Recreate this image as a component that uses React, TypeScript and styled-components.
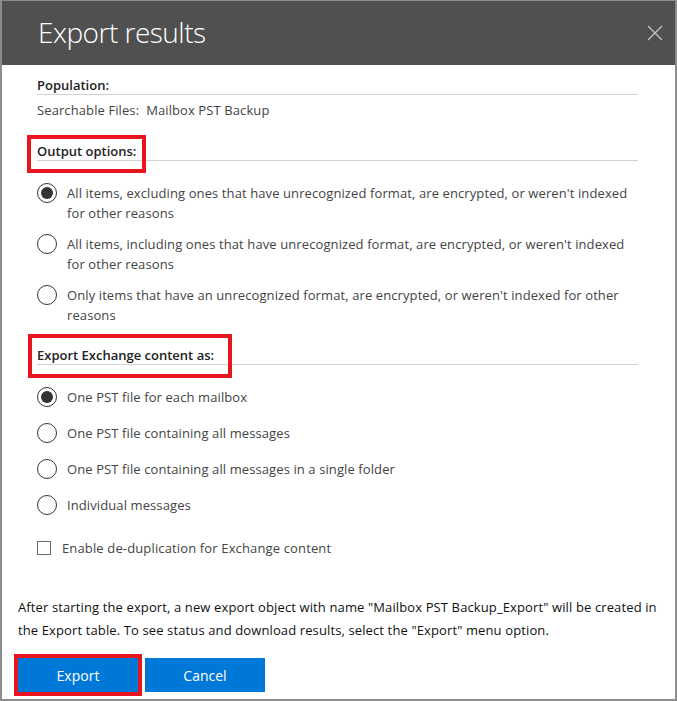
import React from "react";
import styled, { createGlobalStyle } from "styled-components";

const Global = createGlobalStyle`
  html, body { margin: 0; padding: 0; background: #ffffff; }
  * { box-sizing: border-box; }
`;

const Frame = styled.div`
  width: 677px;
  height: 701px;
  border-style: solid;
  border-color: #8c8c8c;
  border-width: 1px 2px 2px 2px;
  background: #ffffff;
  display: flex;
  flex-direction: column;
  font-family: "Open Sans", "Noto Sans", sans-serif;
  color: #444444;
`;

const Header = styled.header`
  height: 64px;
  flex: none;
  background: #505050;
  display: flex;
  align-items: center;
  justify-content: space-between;
  padding: 0 12px 2px 36px;
`;

const Title = styled.h1`
  margin: 0;
  font-size: 28px;
  font-weight: 300;
  line-height: 34px;
  letter-spacing: -0.5px;
  color: #ffffff;
`;

const CloseButton = styled.button`
  width: 16px;
  height: 16px;
  padding: 0;
  border: none;
  background: transparent;
  display: flex;
  margin-top: 1px;
`;

const Body = styled.div`
  padding: 11px 37px 0 35px;
  display: flex;
  flex-direction: column;
`;

const SectionHeading = styled.div<{ $gap: number }>`
  position: relative;
  margin-top: ${(p) => p.$gap}px;
  font-size: 13px;
  font-weight: 600;
  line-height: 18px;
  color: #222222;
  border-bottom: 1px solid #d2d2d2;
`;

const Annotation = styled.span<{ $l: number; $t: number; $w: number; $h: number }>`
  position: absolute;
  left: ${(p) => p.$l}px;
  top: ${(p) => p.$t}px;
  width: ${(p) => p.$w}px;
  height: ${(p) => p.$h}px;
  border: 4px solid #e8141e;
  pointer-events: none;
`;

const Value = styled.div`
  margin-top: 5px;
  font-size: 13px;
  line-height: 20px;
  letter-spacing: 0.1px;
  color: #444444;
`;

const RadioGroup = styled.div<{ $gap: number }>`
  margin-top: 22px;
  display: flex;
  flex-direction: column;
  gap: ${(p) => p.$gap}px;
`;

const Option = styled.label`
  display: flex;
  align-items: flex-start;
  gap: 10px;
  font-size: 13px;
  line-height: 20px;
  letter-spacing: 0.1px;
  color: #444444;
  white-space: pre-line;
`;

const RadioDot = styled.span<{ $checked: boolean }>`
  flex: none;
  width: 20px;
  height: 20px;
  border-radius: 50%;
  border: 1.5px solid #333333;
  display: flex;
  align-items: center;
  justify-content: center;
  &::after {
    content: "";
    width: 12px;
    height: 12px;
    border-radius: 50%;
    background: ${(p) => (p.$checked ? "#333333" : "transparent")};
  }
`;

const CheckRow = styled.label`
  margin-top: 23px;
  display: flex;
  align-items: center;
  gap: 11px;
  font-size: 13px;
  line-height: 20px;
  letter-spacing: 0.14px;
  color: #444444;
`;

const CheckBox = styled.span`
  flex: none;
  width: 14px;
  height: 14px;
  border: 1px solid #6a6a6a;
  background: #ffffff;
`;

const Footer = styled.div`
  margin-top: auto;
  padding: 0 8px 7px 16px;
`;

const Note = styled.p`
  margin: 0;
  font-size: 13px;
  line-height: 23px;
  letter-spacing: 0.12px;
  color: #111111;
  white-space: nowrap;
`;

const Buttons = styled.div`
  margin-top: 16px;
  display: flex;
  gap: 7px;
`;

const ButtonWrap = styled.div`
  position: relative;
`;

const Button = styled.button`
  width: 120px;
  height: 34px;
  border: none;
  background: #0078d7;
  color: #ffffff;
  font-family: "Open Sans", "Noto Sans", sans-serif;
  font-size: 14px;
  padding: 0;
`;

const outputOptions = [
  {
    text: "All items, excluding ones that have unrecognized format, are encrypted, or weren't indexed\nfor other reasons",
    checked: true,
  },
  {
    text: "All items, including ones that have unrecognized format, are encrypted, or weren't indexed\nfor other reasons",
    checked: false,
  },
  {
    text: "Only items that have an unrecognized format, are encrypted, or weren't indexed for other\nreasons",
    checked: false,
  },
];

const exchangeOptions = [
  { text: "One PST file for each mailbox", checked: true },
  { text: "One PST file containing all messages", checked: false },
  { text: "One PST file containing all messages in a single folder", checked: false },
  { text: "Individual messages", checked: false },
];

export default function App() {
  return (
    <>
      <Global />
      <Frame>
        <Header>
          <Title>Export results</Title>
          <CloseButton aria-label="Close">
            <svg width="16" height="16" viewBox="0 0 16 16">
              <path d="M1 1 L15 15 M15 1 L1 15" stroke="#c4c4c4" strokeWidth="1.3" fill="none" />
            </svg>
          </CloseButton>
        </Header>
        <Body>
          <SectionHeading $gap={0}>Population:</SectionHeading>
          <Value>Searchable Files:&nbsp; Mailbox PST Backup</Value>

          <SectionHeading $gap={22}>
            Output options:
            <Annotation $l={-10} $t={-7} $w={119} $h={38} />
          </SectionHeading>
          <RadioGroup $gap={11}>
            {outputOptions.map((o) => (
              <Option key={o.text}>
                <RadioDot $checked={o.checked} />
                {o.text}
              </Option>
            ))}
          </RadioGroup>

          <SectionHeading $gap={21}>
            Export Exchange content as:
            <Annotation $l={-9} $t={-12} $w={204} $h={44} />
          </SectionHeading>
          <RadioGroup $gap={16}>
            {exchangeOptions.map((o) => (
              <Option key={o.text}>
                <RadioDot $checked={o.checked} />
                {o.text}
              </Option>
            ))}
          </RadioGroup>

          <CheckRow>
            <CheckBox />
            Enable de-duplication for Exchange content
          </CheckRow>
        </Body>
        <Footer>
          <Note>
            After starting the export, a new export object with name "Mailbox PST Backup_Export" will be created in
            <br />
            the Export table. To see status and download results, select the "Export" menu option.
          </Note>
          <Buttons>
            <ButtonWrap>
              <Button>Export</Button>
              <Annotation $l={-4} $t={-4} $w={128} $h={42} />
            </ButtonWrap>
            <Button>Cancel</Button>
          </Buttons>
        </Footer>
      </Frame>
    </>
  );
}
